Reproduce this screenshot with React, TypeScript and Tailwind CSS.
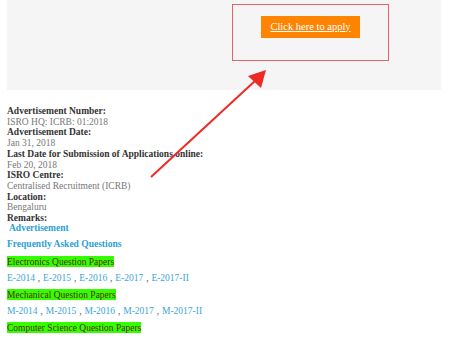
import React from 'react';

const serif = { fontFamily: '"Liberation Serif", "DejaVu Serif", serif' };

const details = [
  { label: 'Advertisement Number:', value: 'ISRO HQ: ICRB: 01:2018' },
  { label: 'Advertisement Date:', value: 'Jan 31, 2018' },
  { label: 'Last Date for Submission of Applications online:', value: 'Feb 20, 2018' },
  { label: 'ISRO Centre:', value: 'Centralised Recruitment (ICRB)' },
  { label: 'Location:', value: 'Bengaluru' },
];

const papers = [
  { title: 'Electronics Question Papers', links: ['E-2014', 'E-2015', 'E-2016', 'E-2017', 'E-2017-II'] },
  { title: 'Mechanical Question Papers', links: ['M-2014', 'M-2015', 'M-2016', 'M-2017', 'M-2017-II'] },
  { title: 'Computer Science Question Papers', links: [] as string[] },
];

export default function App() {
  return (
    <div className="relative w-[451px] h-[338px] overflow-hidden bg-white text-[9.5px]" style={serif}>
      {/* Apply panel */}
      <div className="ml-[7px] w-[434px] h-[90px] bg-[#f5f5f5] pt-[4px] pl-[225px]">
        <div className="w-[157px] h-[57px] border border-[#e5646c] pt-[11px] flex justify-center">
          <a href="#" className="w-[99px] h-[22px] bg-[#ff8400] text-white underline text-[10.5px] flex items-center justify-center">
            Click here to apply
          </a>
        </div>
      </div>

      {/* Details */}
      <div className="px-[7px] pt-[16px] leading-[10.7px]">
        {details.map((d) => (
          <div key={d.label}>
            <div className="font-bold text-[#333333]">{d.label}</div>
            <div className="text-[#777777]">{d.value}</div>
          </div>
        ))}
        <div className="font-bold text-[#333333]">Remarks:</div>
        <a href="#" className="block pl-[2px] mt-[-1px] font-bold text-[#2b9fd6]">Advertisement</a>

        <a href="#" className="block mt-[6px] font-bold text-[#2b9fd6]">Frequently Asked Questions</a>

        {papers.map((p) => (
          <div key={p.title}>
            <div className="mt-[6px]">
              <span className="bg-[#33ff00] text-[#5e2c00] py-[0.5px]">{p.title}</span>
            </div>
            {p.links.length > 0 && (
              <div className="mt-[6px] text-[#3aa6d8]">
                {p.links.map((l, i) => (
                  <span key={l}>
                    <a href="#">{l}</a>
                    {i < p.links.length - 1 && <span className="text-[#555555] mx-[0.5px]"> , </span>}
                  </span>
                ))}
              </div>
            )}
          </div>
        ))}
      </div>

      {/* Annotation arrow */}
      <svg className="absolute left-0 top-0 pointer-events-none" width="451" height="338">
        <line x1="151" y1="177" x2="256" y2="80" stroke="#ee2a24" strokeWidth="2" />
        <polygon points="266,70 248,76 261,88" fill="#ee2a24" />
      </svg>
    </div>
  );
}
